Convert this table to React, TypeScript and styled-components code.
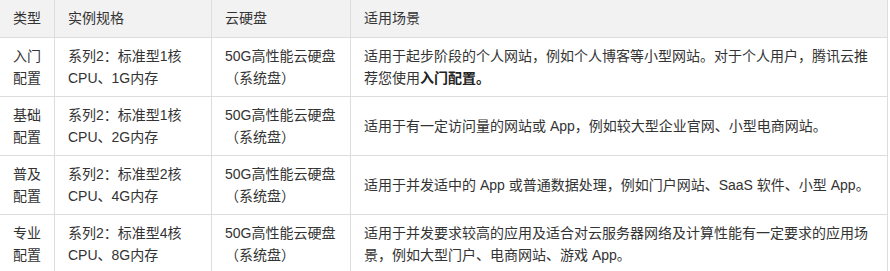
import React from 'react';
import styled, { createGlobalStyle } from 'styled-components';

const GlobalStyle = createGlobalStyle`
	body {
		margin: 0;
		background: #fff;
		font-family: "Liberation Sans", "Noto Sans CJK SC", sans-serif;
		color: #333;
	}
`;

const Table = styled.div`
	display: grid;
	grid-template-columns: 55px 157px 139px 537px;
	width: 888px;
	font-size: 14px;
	line-height: 22px;
`;

const Cell = styled.div<{ $head?: boolean; $first?: boolean }>`
	display: flex;
	align-items: center;
	padding: ${(p) => (p.$head ? '7px 12px 8px 13px' : '7px 12px 7px 13px')};
	min-height: ${(p) => (p.$head ? '22px' : '44px')};
	background: ${(p) => (p.$head ? '#f2f2f2' : '#fff')};
	border-right: 1px solid #dddddd;
	border-bottom: 1px solid #dddddd;
	word-break: normal;
`;

const Strong = styled.b`
	font-weight: bold;
	color: #222;
`;

interface IRow {
	type: string;
	spec: string;
	disk: string;
	scene: React.ReactNode;
}

const rows: IRow[] = [
	{
		type: '入门配置',
		spec: '系列2：标准型1核CPU、1G内存',
		disk: '50G高性能云硬盘（系统盘）',
		scene: (
			<span>
				适用于起步阶段的个人网站，例如个人博客等小型网站。对于个人用户，腾讯云推荐您使用
				<Strong>入门配置。</Strong>
			</span>
		),
	},
	{
		type: '基础配置',
		spec: '系列2：标准型1核CPU、2G内存',
		disk: '50G高性能云硬盘（系统盘）',
		scene: '适用于有一定访问量的网站或 App，例如较大型企业官网、小型电商网站。',
	},
	{
		type: '普及配置',
		spec: '系列2：标准型2核CPU、4G内存',
		disk: '50G高性能云硬盘（系统盘）',
		scene: '适用于并发适中的 App 或普通数据处理，例如门户网站、SaaS 软件、小型 App。',
	},
	{
		type: '专业配置',
		spec: '系列2：标准型4核CPU、8G内存',
		disk: '50G高性能云硬盘（系统盘）',
		scene: '适用于并发要求较高的应用及适合对云服务器网络及计算性能有一定要求的应用场景，例如大型门户、电商网站、游戏 App。',
	},
];

const headers = ['类型', '实例规格', '云硬盘', '适用场景'];

const App: React.FC = () => {
	return (
		<>
			<GlobalStyle />
			<Table>
				{headers.map((h) => (
					<Cell key={h} $head>
						{h}
					</Cell>
				))}
				{rows.map((r) => (
					<React.Fragment key={r.type}>
						<Cell>{r.type}</Cell>
						<Cell>{r.spec}</Cell>
						<Cell>{r.disk}</Cell>
						<Cell>{r.scene}</Cell>
					</React.Fragment>
				))}
			</Table>
		</>
	);
};

export default App;
